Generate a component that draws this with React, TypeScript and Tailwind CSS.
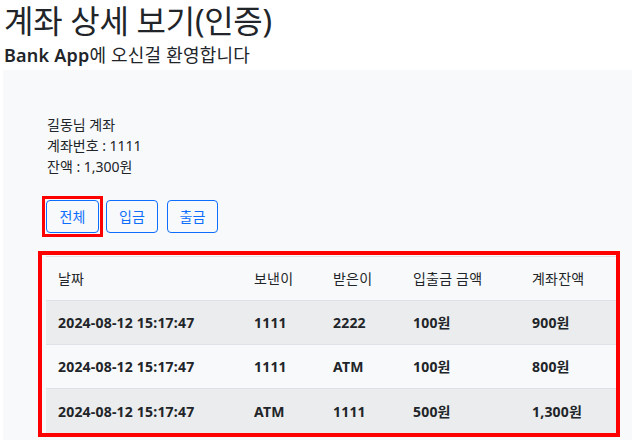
const rows = [
  { date: "2024-08-12 15:17:47", from: "1111", to: "2222", amount: "100원", balance: "900원" },
  { date: "2024-08-12 15:17:47", from: "1111", to: "ATM", amount: "100원", balance: "800원" },
  { date: "2024-08-12 15:17:47", from: "ATM", to: "1111", amount: "500원", balance: "1,300원" },
];

const cols = ["w-[196px]", "w-[79px]", "w-[80px]", "w-[119px]", "w-[97px]"];

function Cell({ w, children, bold }: { w: string; children: React.ReactNode; bold?: boolean }) {
  return (
    <div className={`${w} shrink-0 pl-3 flex items-center tracking-[0.2px] ${bold ? "font-bold" : ""}`}>
      {children}
    </div>
  );
}

export default function App() {
  return (
    <div
      className="w-[632px] h-[440px] overflow-hidden bg-white text-[#212529]"
      style={{ fontFamily: '"Noto Sans", "Noto Sans CJK KR", sans-serif' }}
    >
      <div className="pl-[4px] pt-[2px]">
        <h1 className="text-[32px] leading-[38px] font-normal tracking-[-0.3px]">계좌 상세 보기(인증)</h1>
        <p className="text-[18px] leading-[30px] tracking-[0.2px]">
          <span className="font-semibold">Bank App</span>에 오신걸 환영합니다
        </p>
      </div>

      <div className="ml-[3px] bg-[#f8f9fa] h-[370px] pt-[44px] pl-[35px]">
        <div className="pl-[9px] text-[14px] leading-[21px]">
          <p>길동님 계좌</p>
          <p>계좌번호 : 1111</p>
          <p>잔액 : 1,300원</p>
        </div>

        <div className="mt-[23px] flex items-center pl-[8px]">
          {/* highlight box drawn over the button, does not take space */}
          <div className="-m-[4px] border-[3px] border-[#ff0000] p-px">
            <button className="block h-[33px] w-[53px] rounded border border-[#0d6efd] text-[14px] text-[#0d6efd]">
              전체
            </button>
          </div>
          <button className="ml-[7px] h-[33px] w-[52px] rounded border border-[#0d6efd] text-[14px] text-[#0d6efd]">
            입금
          </button>
          <button className="ml-[9px] h-[33px] w-[51px] rounded border border-[#0d6efd] text-[14px] text-[#0d6efd]">
            출금
          </button>
        </div>

        <div className="mt-[18px] w-[582px] border-[4px] border-[#ff0000] pl-[4px] pt-px text-[14px]">
          <div className="border-t border-[#dee2e6]">
            <div className="flex h-[44px] bg-[#f8f9fa] border-b border-[#dee2e6]">
              <Cell w={cols[0]}>날짜</Cell>
              <Cell w={cols[1]}>보낸이</Cell>
              <Cell w={cols[2]}>받은이</Cell>
              <Cell w={cols[3]}>입출금 금액</Cell>
              <Cell w={cols[4]}>계좌잔액</Cell>
            </div>
            {rows.map((r, i) => (
              <div
                key={i}
                className={`flex h-[44px] ${i % 2 === 0 ? "bg-[#ebeced]" : "bg-[#f8f9fa]"} ${i < rows.length - 1 ? "border-b border-[#dee2e6]" : ""}`}
              >
                <Cell w={cols[0]} bold>{r.date}</Cell>
                <Cell w={cols[1]} bold>{r.from}</Cell>
                <Cell w={cols[2]} bold>{r.to}</Cell>
                <Cell w={cols[3]} bold>{r.amount}</Cell>
                <Cell w={cols[4]} bold>{r.balance}</Cell>
              </div>
            ))}
          </div>
        </div>
      </div>
    </div>
  );
}
